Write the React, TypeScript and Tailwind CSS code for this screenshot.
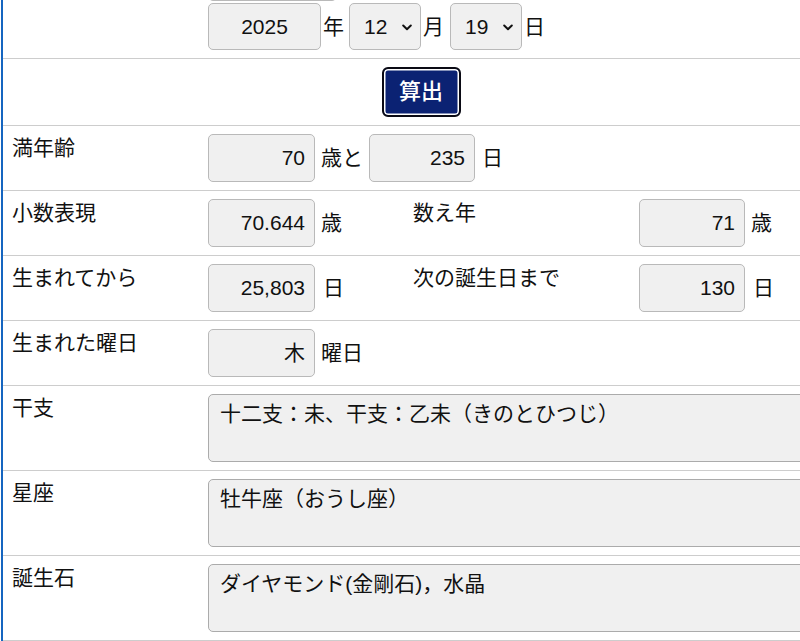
import React from "react";

const font = "font-['Liberation_Sans','Noto_Sans_CJK_JP',sans-serif]";

function Box({ w, children, center }: { w: string; children?: React.ReactNode; center?: boolean }) {
  return (
    <div
      className={`${w} h-[48px] shrink-0 rounded-[5px] border border-[#b9b9b9] bg-[#f0f0f0] flex items-center ${
        center ? "justify-center" : "justify-end pr-[9px]"
      } text-[21px] text-[#111]`}
    >
      {children}
    </div>
  );
}

function Select({ value }: { value: string }) {
  return (
    <div className="w-[72px] h-[47px] shrink-0 rounded-[5px] border border-[#b9b9b9] bg-[#f0f0f0] flex items-center pl-[14px] pr-[8px] text-[21px] text-[#111]">
      <span className="flex-1">{value}</span>
      <svg width="10" height="7" viewBox="0 0 10 7" className="mt-[1px]">
        <path d="M1.2 1.5 L5 5.2 L8.8 1.5" fill="none" stroke="#111" strokeWidth="2" strokeLinecap="round" strokeLinejoin="round" />
      </svg>
    </div>
  );
}

function Label({ children, pl = "pl-[9px]" }: { children?: React.ReactNode; pl?: string }) {
  return <div className={`${pl} pt-[7px] leading-[30px] text-[21px] text-[#111]`}>{children}</div>;
}

function Unit({ children, ml = "ml-[6px]" }: { children: React.ReactNode; ml?: string }) {
  return <span className={`${ml} text-[21px] text-[#111] whitespace-nowrap`}>{children}</span>;
}

function Row({ children }: { children: React.ReactNode }) {
  return (
    <div className="grid grid-cols-[197px_205px_226px_208px] border-b border-[#cdcdcd]">{children}</div>
  );
}

function Val({ children, span }: { children?: React.ReactNode; span?: string }) {
  return <div className={`${span ?? ""} px-[8px] py-[8px] flex items-center`}>{children}</div>;
}

function Area({ text }: { text: string }) {
  return (
    <div className="col-span-3 px-[8px] py-[8px]">
      <div className="h-[68px] rounded-[5px] border border-[#ababab] bg-[#f0f0f0] pl-[11px] pt-[4px] leading-[30px] text-[21px] text-[#111] whitespace-nowrap overflow-hidden">
        {text}
      </div>
    </div>
  );
}

export default function App() {
  return (
    <div className={`w-[800px] h-[641px] overflow-hidden bg-white ${font}`}>
      <div className="ml-[1px] border-l-2 border-[#1565c0] w-[838px] -mt-[54px]">
        {/* date row */}
        <Row>
          <Label></Label>
          <div className="col-span-3 px-[8px] py-[8px] flex flex-col gap-[2px]">
            <div className="w-[129px] h-[47px] rounded-[5px] border border-[#b9b9b9] bg-[#f0f0f0]"></div>
            <div className="flex items-center">
              <div className="w-[113px] h-[47px] shrink-0 rounded-[5px] border border-[#b9b9b9] bg-[#f0f0f0] flex items-center justify-center text-[21px] text-[#111]">
                2025
              </div>
              <Unit ml="ml-[2px]">年</Unit>
              <div className="ml-[5px]">
                <Select value="12" />
              </div>
              <Unit ml="ml-[2px]">月</Unit>
              <div className="ml-[6px]">
                <Select value="19" />
              </div>
              <Unit ml="ml-[2px]">日</Unit>
            </div>
          </div>
        </Row>

        {/* button row */}
        <div className="border-b border-[#cdcdcd] py-[8px] flex justify-center">
          <button className="w-[79px] h-[50px] rounded-[6px] border-2 border-[#0a0a14] bg-[#0b2273] shadow-[inset_0_0_0_1.5px_#ffffff] text-white text-[22px] font-medium leading-none">
            算出
          </button>
        </div>

        <Row>
          <Label>満年齢</Label>
          <Val span="col-span-3">
            <Box w="w-[107px]">70</Box>
            <Unit>歳と</Unit>
            <div className="ml-[6px]">
              <Box w="w-[106px]">235</Box>
            </div>
            <Unit ml="ml-[7px]">日</Unit>
          </Val>
        </Row>

        <Row>
          <Label>小数表現</Label>
          <Val>
            <Box w="w-[107px]">70.644</Box>
            <Unit>歳</Unit>
          </Val>
          <Label pl="pl-[8px]">数え年</Label>
          <Val>
            <Box w="w-[106px]">71</Box>
            <Unit>歳</Unit>
          </Val>
        </Row>

        <Row>
          <Label>生まれてから</Label>
          <Val>
            <Box w="w-[107px]">25,803</Box>
            <Unit ml="ml-[8px]">日</Unit>
          </Val>
          <Label pl="pl-[8px]">次の誕生日まで</Label>
          <Val>
            <Box w="w-[106px]">130</Box>
            <Unit ml="ml-[8px]">日</Unit>
          </Val>
        </Row>

        <Row>
          <Label>生まれた曜日</Label>
          <Val>
            <Box w="w-[107px]">木</Box>
            <Unit>曜日</Unit>
          </Val>
          <div></div>
          <div></div>
        </Row>

        <Row>
          <Label>干支</Label>
          <Area text="十二支：未、干支：乙未（きのとひつじ）" />
        </Row>

        <Row>
          <Label>星座</Label>
          <Area text="牡牛座（おうし座）" />
        </Row>

        <Row>
          <Label>誕生石</Label>
          <Area text="ダイヤモンド(金剛石)，水晶" />
        </Row>
      </div>
    </div>
  );
}
